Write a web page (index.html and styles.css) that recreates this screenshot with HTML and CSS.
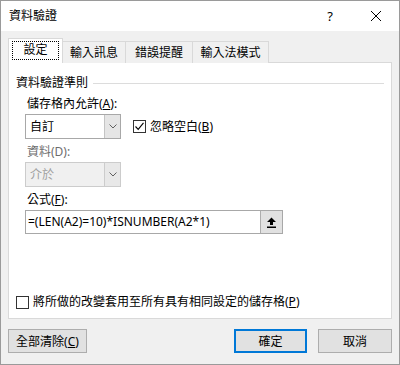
FILE: index.html
```html
<!DOCTYPE html>
<html lang="zh-Hant">

<head>
    <meta charset="UTF-8">
    <title>資料驗證</title>
    <link rel="stylesheet" href="styles.css">
</head>

<body>
    <div class="dialog">
        <div class="titlebar">
            <span class="title">資料驗證</span>
            <span class="help">?</span>
            <span class="close">
                <svg width="12" height="12" viewBox="0 0 12 12">
                    <path d="M1 1 L11 11 M11 1 L1 11" stroke="#000" stroke-width="1" fill="none" />
                </svg>
            </span>
        </div>

        <div class="content">
            <div class="tabs">
                <div class="tab active"><span class="focus">設定</span></div>
                <div class="tab tab-2">輸入訊息</div>
                <div class="tab tab-3">錯誤提醒</div>
                <div class="tab tab-4">輸入法模式</div>
            </div>

            <div class="panel">
                <div class="group-title">
                    <span>資料驗證準則</span>
                    <div class="rule"></div>
                </div>

                <div class="label">儲存格內允許(<u>A</u>):</div>
                <div class="row">
                    <div class="combo">
                        <div class="combo-text">自訂</div>
                        <div class="combo-btn">
                            <svg width="8" height="5" viewBox="0 0 8 5">
                                <path d="M0.5 0.5 L4 4 L7.5 0.5" stroke="#606060" fill="none" />
                            </svg>
                        </div>
                    </div>
                    <div class="check check-blank">
                        <span class="box">
                            <svg width="11" height="11" viewBox="0 0 11 11">
                                <path d="M1.5 5.5 L4.2 8.3 L9.5 1.8" stroke="#000" stroke-width="1.1" fill="none" />
                            </svg>
                        </span>
                        <span>忽略空白(<u>B</u>)</span>
                    </div>
                </div>

                <div class="label disabled">資料(D):</div>
                <div class="combo combo-disabled">
                    <div class="combo-text">介於</div>
                    <div class="combo-btn">
                        <svg width="8" height="5" viewBox="0 0 8 5">
                            <path d="M0.5 0.5 L4 4 L7.5 0.5" stroke="#606060" fill="none" />
                        </svg>
                    </div>
                </div>

                <div class="label">公式(<u>F</u>):</div>
                <div class="formula">
                    <div class="formula-text">=(LEN(A2)=10)*ISNUMBER(A2*1)</div>
                    <div class="formula-btn">
                        <svg width="11" height="11" viewBox="0 0 11 11">
                            <path d="M5.5 0.5 L1 5 L4 5 L4 8 L7 8 L7 5 L10 5 Z" fill="#000" />
                            <rect x="1" y="9.5" width="9" height="1.5" fill="#000" />
                        </svg>
                    </div>
                </div>

                <div class="spacer"></div>

                <div class="check check-apply">
                    <span class="box"></span>
                    <span>將所做的改變套用至所有具有相同設定的儲存格(<u>P</u>)</span>
                </div>
            </div>

            <div class="buttons">
                <button class="btn btn-clear">全部清除(<u>C</u>)</button>
                <div class="spacer-h"></div>
                <button class="btn btn-default">確定</button>
                <button class="btn btn-cancel">取消</button>
            </div>
        </div>
    </div>
</body>

</html>
```

FILE: styles.css
```css
body {
    margin: 0;
    padding: 0;
    background: #ffffff;
    font-family: "Noto Sans", "Noto Sans CJK TC", sans-serif;
    font-size: 12px;
    color: #000;
}

.dialog {
    width: 400px;
    height: 365px;
    box-sizing: border-box;
    border: 1px solid #9a9a9a;
    background: #f0f0f0;
    display: flex;
    flex-direction: column;
}

.titlebar {
    height: 30px;
    background: #ffffff;
    display: flex;
    align-items: center;
    padding-left: 8px;
}

.title {
    flex: 1;
    font-size: 12px;
    line-height: 16px;
}

.help {
    width: 46px;
    text-align: center;
    font-size: 13px;
    margin-right: 0;
}

.close {
    width: 46px;
    display: flex;
    justify-content: center;
    align-items: center;
}

.content {
    flex: 1;
    display: flex;
    flex-direction: column;
    padding: 0 7px;
}

.tabs {
    margin-top: 8px;
    height: 24px;
    display: flex;
    align-items: flex-end;
    margin-bottom: -1px;
    position: relative;
    z-index: 1;
}

.tab {
    box-sizing: border-box;
    height: 22px;
    border: 1px solid #d9d9d9;
    border-bottom: none;
    border-left: none;
    background: #f0f0f0;
    display: flex;
    align-items: center;
    justify-content: center;
    line-height: 16px;
}

.tab.active {
    height: 25px;
    width: 55px;
    background: #ffffff;
    border-left: 1px solid #d9d9d9;
    padding-bottom: 2px;
}

.focus {
    display: flex;
    align-items: center;
    justify-content: center;
    width: 47px;
    height: 19px;
    box-sizing: border-box;
    border: 1px dotted #000;
}

.tab-2 {
    width: 63px;
}

.tab-3 {
    width: 67px;
}

.tab-4 {
    width: 76px;
}

.panel {
    height: 257px;
    box-sizing: border-box;
    background: #ffffff;
    border: 1px solid #d9d9d9;
    display: flex;
    flex-direction: column;
    padding: 12px 7px 8px 7px;
}

.group-title {
    display: flex;
    align-items: center;
    line-height: 16px;
}

.rule {
    flex: 1;
    height: 1px;
    background: #dcdcdc;
    margin-left: 5px;
}

.label {
    margin-top: 5px;
    margin-left: 11px;
    line-height: 16px;
}

.label.disabled {
    color: #6d6d6d;
}

.row {
    display: flex;
    align-items: center;
}

.combo {
    margin-top: 2px;
    margin-left: 9px;
    width: 96px;
    height: 25px;
    box-sizing: border-box;
    border: 1px solid #a8a8a8;
    background: #ffffff;
    display: flex;
}

.combo-text {
    flex: 1;
    padding-left: 4px;
    line-height: 23px;
}

.combo-btn {
    width: 15px;
    background: #e5e5e5;
    border-left: 1px solid #c4c4c4;
    display: flex;
    align-items: center;
    justify-content: center;
}

.combo-disabled {
    background: #f0f0f0;
    border-color: #cccccc;
    color: #a0a0a0;
}

.combo-disabled .combo-btn {
    background: #e8e8e8;
    border-left-color: #cccccc;
}

.check {
    display: flex;
    align-items: center;
    line-height: 16px;
}

.box {
    width: 13px;
    height: 13px;
    box-sizing: border-box;
    border: 1px solid #333333;
    background: #ffffff;
    display: flex;
    align-items: center;
    justify-content: center;
    margin-right: 4px;
}

.check-blank {
    margin-left: 12px;
    margin-top: 2px;
}

.formula {
    margin-top: 2px;
    margin-left: 9px;
    width: 258px;
    height: 24px;
    box-sizing: border-box;
    border: 1px solid #a8a8a8;
    background: #ffffff;
    display: flex;
}

.formula-text {
    flex: 1;
    padding-left: 2px;
    line-height: 22px;
}

.formula-btn {
    width: 21px;
    background: #e1e1e1;
    border-left: 1px solid #adadad;
    display: flex;
    align-items: center;
    justify-content: center;
}

.spacer {
    flex: 1;
}

.check-apply {
    margin-left: 0;
}

.buttons {
    margin-top: 10px;
    display: flex;
    height: 24px;
}

.spacer-h {
    flex: 1;
}

.btn {
    height: 24px;
    box-sizing: border-box;
    border: 1px solid #adadad;
    background: #e1e1e1;
    font-family: "Noto Sans", "Noto Sans CJK TC", sans-serif;
    font-size: 12px;
    padding: 0;
    color: #000;
}

.btn-clear {
    width: 79px;
}

.btn-default {
    width: 73px;
    border: 2px solid #0078d7;
}

.btn-cancel {
    width: 74px;
    margin-left: 11px;
}
```
